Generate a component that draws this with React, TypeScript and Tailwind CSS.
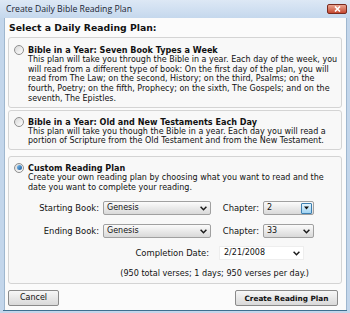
import React from "react";

const Chevron = () => (
  <svg width="7" height="5" viewBox="0 0 7 5" className="block">
    <path d="M0.6 0.8 L3.5 3.7 L6.4 0.8" fill="none" stroke="#1a1a1a" strokeWidth="1.5" />
  </svg>
);

const Radio = ({ checked }: { checked?: boolean }) => (
  <div className="w-[10px] h-[10px] rounded-full border border-[#8f8f8f] bg-gradient-to-br from-[#d8d8d8] to-[#ffffff] flex items-center justify-center shrink-0">
    {checked && <div className="w-[5px] h-[5px] rounded-full bg-gradient-to-br from-[#7cc0f0] to-[#1a5a9c]" />}
  </div>
);

const Select = ({ value, w, hot }: { value: string; w: string; hot?: boolean }) => (
  <div className={`${w} h-[14px] border border-[#a0a0a0] rounded-[2px] bg-gradient-to-b from-[#fbfbfb] to-[#d9d9d9] flex items-center pl-[3px] pr-[1px]`}>
    <span className="flex-1 text-[8px] leading-none text-[#111]">{value}</span>
    {hot ? (
      <div className="w-[11px] h-[11px] border border-[#3c7fb1] rounded-[1px] bg-gradient-to-b from-[#e5f4fc] to-[#9fd3f2] flex items-center justify-center">
        <svg width="5" height="4" viewBox="0 0 5 4"><path d="M0 0.5 L5 0.5 L2.5 3.5 Z" fill="#111" /></svg>
      </div>
    ) : (
      <div className="w-[11px] flex items-center justify-center"><Chevron /></div>
    )}
  </div>
);

const Title = ({ children }: { children: React.ReactNode }) => (
  <span className="text-[8.1px] font-bold text-[#111] leading-[10px] whitespace-nowrap">{children}</span>
);

export default function App() {
  return (
    <div className="w-[350px] h-[313px] bg-[#c3d6eb] flex flex-col" style={{ fontFamily: '"DejaVu Sans", sans-serif' }}>
      {/* title bar */}
      <div className="h-[18px] bg-gradient-to-b from-[#dde8f5] to-[#c5d8ed] flex items-start pl-[6px] pr-[3px] shrink-0">
        <span className="flex-1 text-[8.7px] leading-[18px] text-[#1a2533]" style={{ fontFamily: '"Open Sans", sans-serif' }}>Create Daily Bible Reading Plan</span>
        <div className="w-[20px] h-[10px] mt-[4px] rounded-[2px] border border-[#7a2a1e] bg-gradient-to-b from-[#e9a592] to-[#c5472f] flex items-center justify-center">
          <svg width="7" height="6" viewBox="0 0 7 6"><path d="M1 0.5 L6 5.5 M6 0.5 L1 5.5" stroke="#fff" strokeWidth="1.6" /></svg>
        </div>
      </div>
      {/* content */}
      <div className="h-[292px] ml-[4px] mr-[3px] bg-[#fbfbfb] border-l border-r border-[#9fb7cf] flex flex-col pl-[3px] pr-[4px] pt-[4px]">
        <div className="h-[12px] text-[9.3px] font-bold text-[#111] pl-[1px] leading-[12px] mb-[3px]">Select a Daily Reading Plan:</div>

        <div className="border border-[#d4d4d4] rounded-[3px] bg-[#f8f8f8] pl-[5px] pr-[4px] pt-[7px] pb-[3px] mb-[2px]">
          <div className="flex items-center gap-[4px]">
            <Radio />
            <Title>Bible in a Year: Seven Book Types a Week</Title>
          </div>
          <p className="pl-[14px] text-[8px] leading-[9.7px] text-[#111] whitespace-nowrap">
            This plan will take you through the Bible in a year. Each day of the week, you<br />
            will read from a different type of book: On the first day of the plan, you will<br />
            read from The Law; on the second, History; on the third, Psalms; on the<br />
            fourth, Poetry; on the fifth, Prophecy; on the sixth, The Gospels; and on the<br />
            seventh, The Epistles.
          </p>
        </div>

        <div className="border border-[#d4d4d4] rounded-[3px] bg-[#f8f8f8] pl-[5px] pr-[4px] pt-[6px] pb-[3px] mb-[6px]">
          <div className="flex items-center gap-[4px]">
            <Radio />
            <Title>Bible in a Year: Old and New Testaments Each Day</Title>
          </div>
          <p className="pl-[14px] text-[8px] leading-[9.7px] text-[#111] whitespace-nowrap">
            This plan will take you though the Bible in a year. Each day you will read a<br />
            portion of Scripture from the Old Testament and from the New Testament.
          </p>
        </div>

        <div className="border border-[#d4d4d4] rounded-[3px] bg-[#f8f8f8] pl-[5px] pr-[4px] pt-[6px] pb-[5px]">
          <div className="flex items-center gap-[4px]">
            <Radio checked />
            <Title>Custom Reading Plan</Title>
          </div>
          <p className="pl-[14px] text-[8px] leading-[9.7px] text-[#111] whitespace-nowrap">
            Create your own reading plan by choosing what you want to read and the<br />
            date you want to complete your reading.
          </p>
          <div className="flex flex-col mt-[9px] text-[8.4px] text-[#111]">
            <div className="flex items-center">
              <span className="w-[89px] text-right pr-[4px]">Starting Book:</span>
              <Select value="Genesis" w="w-[108px]" />
              <span className="w-[52px] text-right pr-[4px]">Chapter:</span>
              <Select value="2" w="w-[51px]" hot />
            </div>
            <div className="flex items-center mt-[9px]">
              <span className="w-[89px] text-right pr-[4px]">Ending Book:</span>
              <Select value="Genesis" w="w-[108px]" />
              <span className="w-[52px] text-right pr-[4px]">Chapter:</span>
              <Select value="33" w="w-[51px]" />
            </div>
            <div className="flex items-center mt-[8px]">
              <span className="w-[205px] text-right pr-[10px]">Completion Date:</span>
              <div className="w-[85px] h-[14px] bg-white border border-[#eeeeee] flex items-center pl-[4px] pr-[1px]">
                <span className="flex-1 leading-none text-[8px]">2/21/2008</span>
                <div className="w-[11px] flex items-center justify-center"><Chevron /></div>
              </div>
            </div>
            <div className="flex justify-end pr-[28px] mt-[8px] text-[8.1px] leading-[10px]">(950 total verses; 1 days; 950 verses per day.)</div>
          </div>
        </div>

        <div className="flex justify-between items-center mt-[6px] pr-[4px]">
          <button className="w-[51px] h-[16px] border border-[#8a8a8a] rounded-[2px] bg-gradient-to-b from-[#f7f7f7] to-[#d9d9d9] text-[8px] text-[#111] leading-none">Cancel</button>
          <button className="w-[103px] h-[16px] border border-[#8a8a8a] rounded-[2px] bg-gradient-to-b from-[#f7f7f7] to-[#d9d9d9] text-[7.3px] font-bold text-[#111] leading-none">Create Reading Plan</button>
        </div>
      </div>
      <div className="h-[1px] mx-[3px] bg-[#3f6f8f]" />
    </div>
  );
}
